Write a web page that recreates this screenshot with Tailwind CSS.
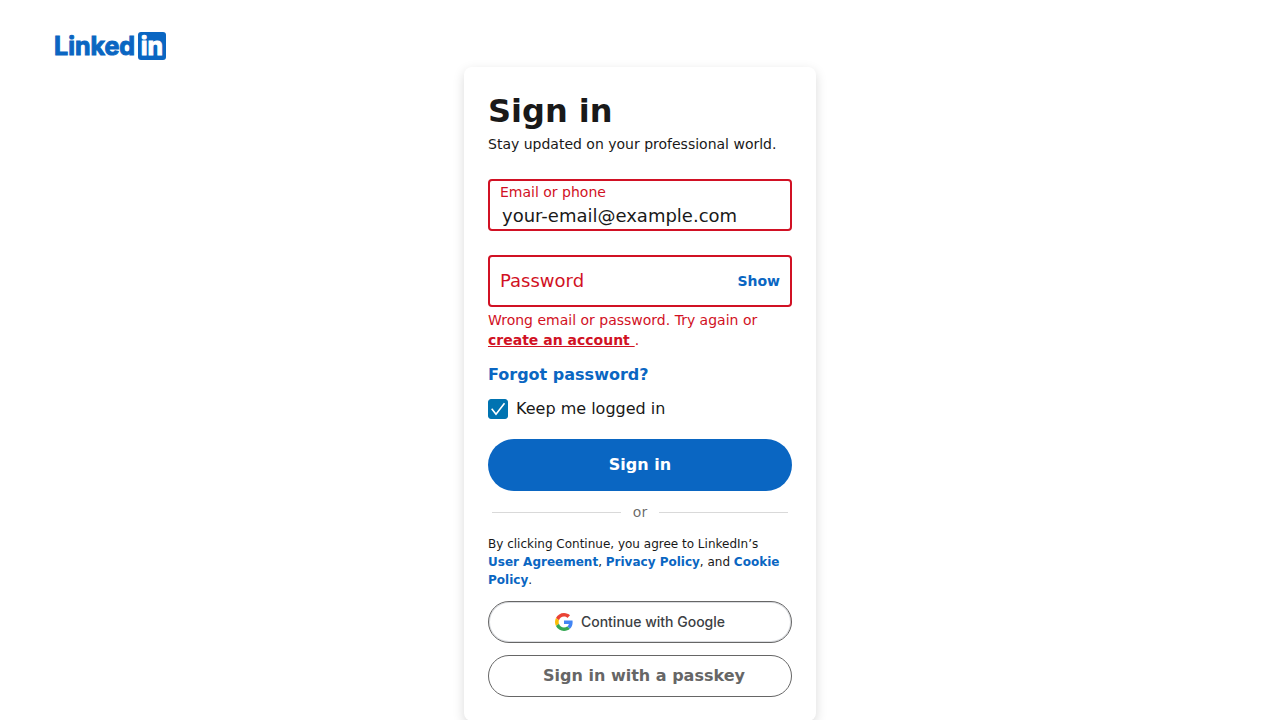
<!DOCTYPE html>
<html lang="en">
<head>
<meta charset="utf-8">
<meta name="viewport" content="width=device-width, initial-scale=1">
<title>LinkedIn Login, Sign in</title>
<script src="https://cdn.jsdelivr.net/npm/@tailwindcss/browser@4"></script>
</head>
<body class="bg-white font-['DejaVu_Sans',sans-serif] text-[#191919]">
<header class="px-14 pt-8">
  <a href="#" aria-label="LinkedIn" class="inline-flex h-7 items-center gap-1 align-top font-[Inter,sans-serif] text-[25px] leading-7 font-bold text-[#0a66c2]">
    <span class="-ml-0.5 w-20 [-webkit-text-stroke:1px_#0a66c2]">Linked</span>
    <span class="flex size-7 items-center justify-center rounded-[3px] bg-[#0a66c2] text-white [-webkit-text-stroke:1px_#fff]">in</span>
  </a>
</header>
<main class="flex justify-center pt-[7px]">
  <section class="w-88 rounded-lg bg-white p-6 shadow-[0_4px_12px_rgba(0,0,0,0.15)]">
    <h1 class="text-[32px] leading-10 font-bold">Sign in</h1>
    <p class="mt-[3px] text-sm leading-5">Stay updated on your professional world.</p>
    <form class="mt-[25px]">
      <div class="flex h-13 flex-col rounded-sm border-2 border-[#d11124] px-2.5">
        <label for="email" class="text-sm leading-[22px] text-[#d11124]">Email or phone</label>
        <input id="email" type="email" value="your-email@example.com" class="min-h-0 w-full flex-1 px-0.5 text-lg leading-6 outline-none">
      </div>
      <div class="mt-6 flex h-13 items-center rounded-sm border-2 border-[#d11124] px-2.5">
        <label for="password" class="text-lg leading-6 text-[#d11124]">Password</label>
        <input id="password" type="password" class="h-full min-w-0 flex-1 outline-none">
        <button type="button" class="text-sm font-bold text-[#0a66c2]">Show</button>
      </div>
      <p class="mt-[3px] text-sm leading-5 text-[#d11124]">Wrong email or password. Try again or <a href="#" class="font-bold whitespace-pre underline">create an account </a>.</p>
      <a href="#" class="mt-[13px] inline-block text-base leading-6 font-bold text-[#0a66c2]">Forgot password?</a>
      <div class="mt-2.5 flex items-center gap-2">
        <span class="grid size-5">
          <input id="remember" type="checkbox" checked class="peer col-start-1 row-start-1 size-5 appearance-none rounded-[3px] border border-black/60 checked:border-[#0073b1] checked:bg-[#0073b1]">
          <svg class="pointer-events-none col-start-1 row-start-1 size-5 opacity-0 peer-checked:opacity-100" viewBox="0 0 20 20" fill="none" stroke="#fff" stroke-width="1.6"><path d="M3.7 9.8 8 15.2 16.5 4.3"/></svg>
        </span>
        <label for="remember" class="text-base leading-6">Keep me logged in</label>
      </div>
      <button type="submit" class="mt-[18px] h-13 w-full rounded-full bg-[#0a66c2] text-base font-bold text-white">Sign in</button>
    </form>
    <div class="mx-1 mt-[11px] flex items-center gap-3 text-sm leading-5 text-black/60">
      <span class="h-px flex-1 bg-black/15"></span>or<span class="h-px flex-1 bg-black/15"></span>
    </div>
    <p class="mt-[13px] text-xs leading-[18px]">By clicking Continue, you agree to LinkedIn’s <a href="#" class="font-bold text-[#0a66c2]">User Agreement</a>, <a href="#" class="font-bold text-[#0a66c2]">Privacy Policy</a>, and <a href="#" class="font-bold text-[#0a66c2]">Cookie Policy</a>.</p>
    <button type="button" class="mt-3 flex h-[42px] w-full items-center justify-center gap-2 rounded-full border border-[#666] font-[Inter,sans-serif] text-sm font-medium text-[#3c4043] shadow-[inset_0_0_0_1px_#dadce0]">
      <svg class="size-[18px]" viewBox="0 0 48 48" aria-hidden="true"><path fill="#EA4335" d="M24 9.5c3.54 0 6.71 1.22 9.21 3.6l6.85-6.85C35.9 2.38 30.47 0 24 0 14.62 0 6.51 5.38 2.56 13.22l7.98 6.19C12.43 13.72 17.74 9.5 24 9.5z"/><path fill="#4285F4" d="M46.98 24.55c0-1.57-.15-3.09-.38-4.55H24v9.02h12.94c-.58 2.96-2.26 5.48-4.78 7.18l7.73 6c4.51-4.18 7.09-10.36 7.09-17.65z"/><path fill="#FBBC05" d="M10.53 28.59c-.48-1.45-.76-2.99-.76-4.59s.27-3.14.76-4.59l-7.98-6.19C.92 16.46 0 20.12 0 24c0 3.88.92 7.54 2.56 10.78l7.97-6.19z"/><path fill="#34A853" d="M24 48c6.48 0 11.93-2.13 15.89-5.81l-7.73-6c-2.15 1.45-4.92 2.3-8.16 2.3-6.26 0-11.57-4.22-13.47-9.91l-7.98 6.19C6.51 42.62 14.62 48 24 48z"/></svg>
      Continue with Google
    </button>
    <button type="button" class="mt-3 h-[42px] w-full rounded-full border border-[#666] pl-2 text-base font-bold text-[#666]">Sign in with a passkey</button>
  </section>
</main>
</body>
</html>
